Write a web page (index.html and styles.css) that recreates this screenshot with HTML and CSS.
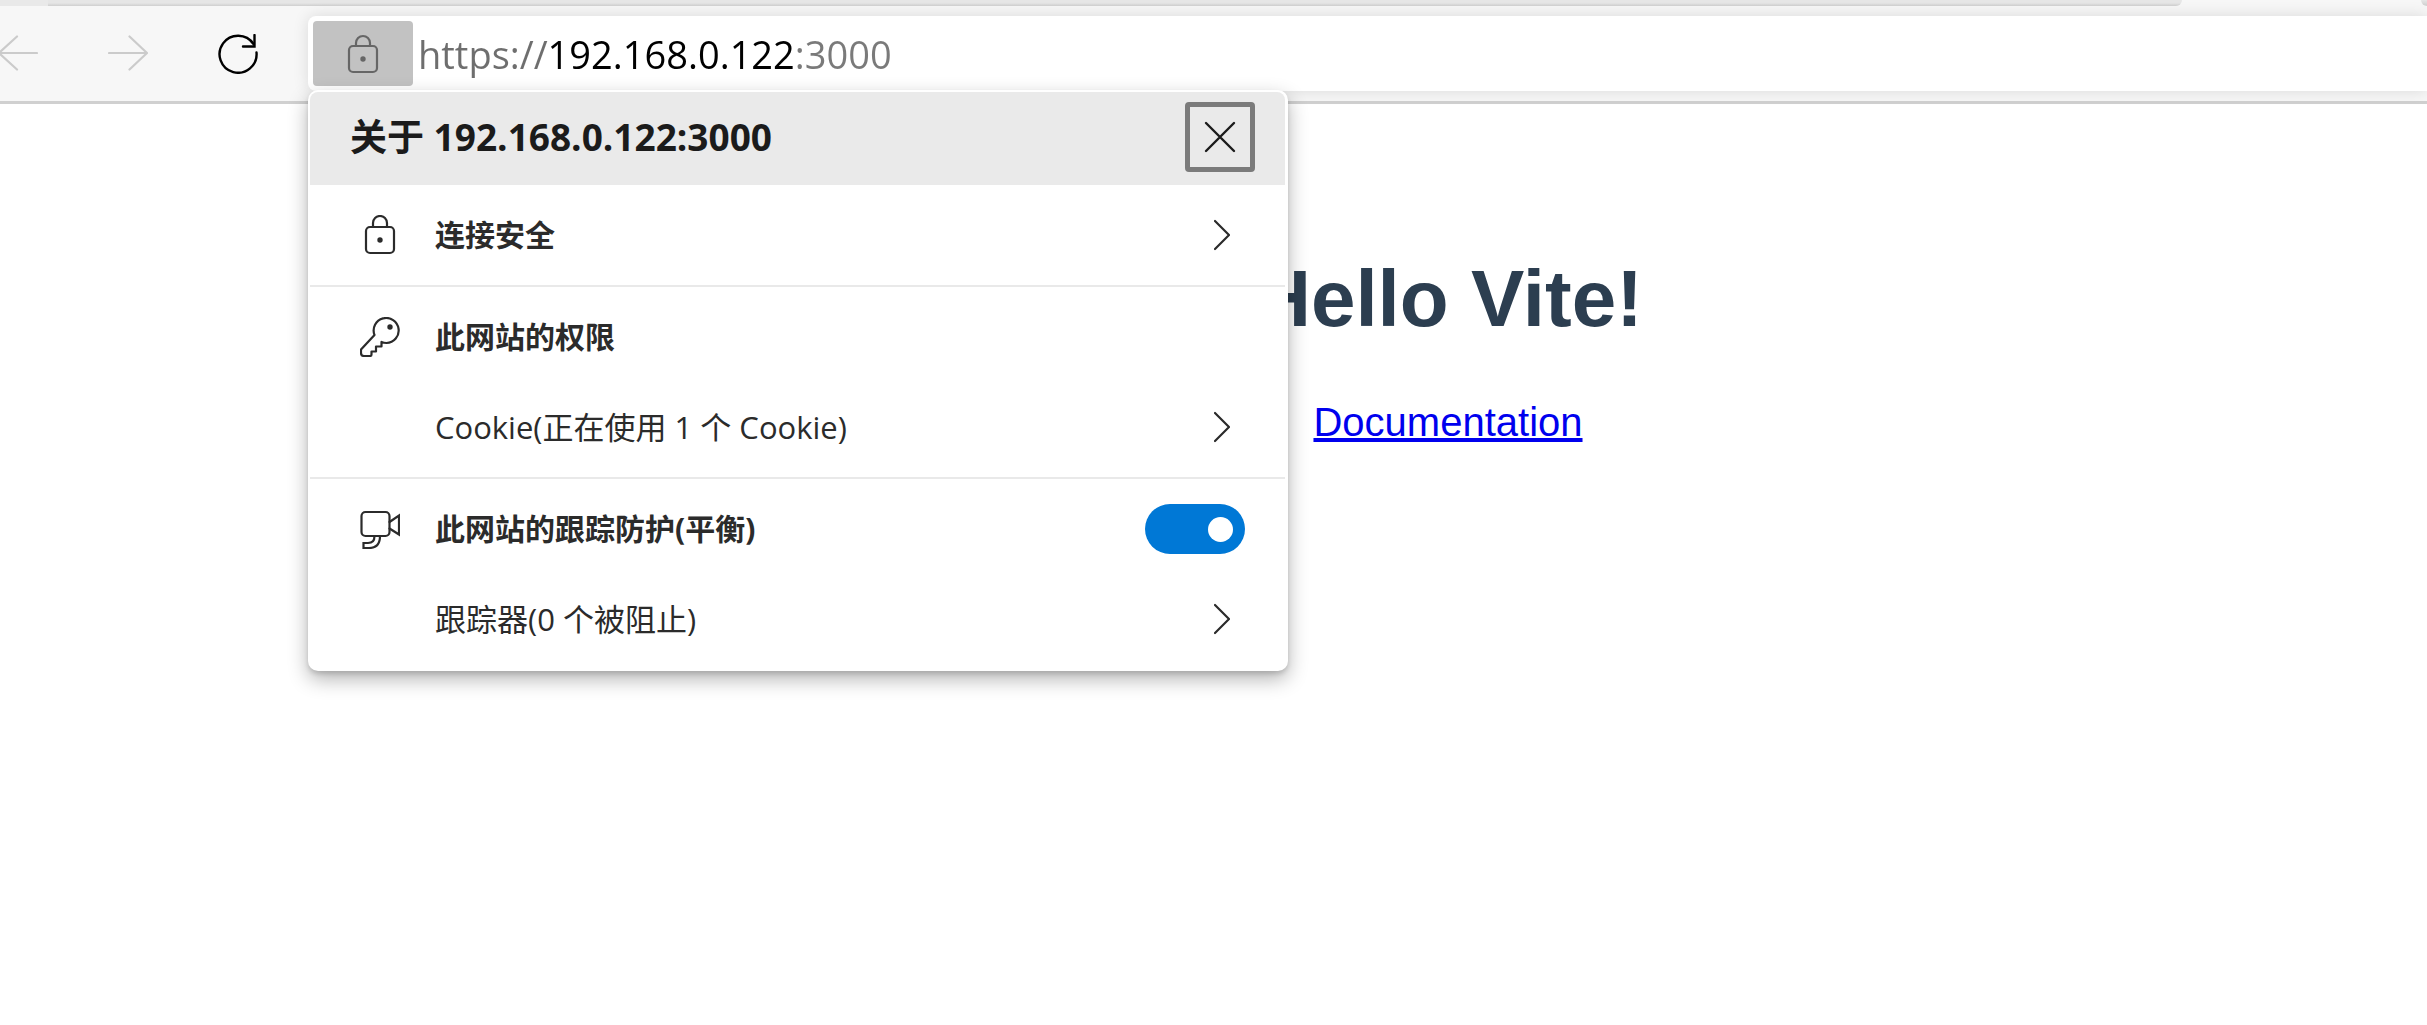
FILE: index.html
```html
<!DOCTYPE html>
<html lang="zh-CN">
<head>
<meta charset="utf-8">
<meta name="viewport" content="width=device-width, initial-scale=1">
<title>Vite App</title>
<link rel="stylesheet" href="styles.css">
</head>
<body>
<header class="browser">
  <div class="tabs">
    <div class="tabs-start"></div>
    <div class="tabs-rest"></div>
    <div class="tab-active"></div>
    <div class="tabs-end"></div>
  </div>
  <div class="toolbar">
    <nav class="nav">
      <button class="nav-btn" disabled aria-label="后退">
        <svg viewBox="0 0 40 40" stroke-width="2.200"><path d="M39 19H1M19 2.500L1 19l18 16.500"/></svg>
      </button>
      <button class="nav-btn" disabled aria-label="前进">
        <svg viewBox="0 0 40 40" stroke-width="2.200"><path d="M1 19h38M21.500 2.500L39 19 21.500 35.500"/></svg>
      </button>
      <button class="nav-btn reload" aria-label="刷新">
        <svg viewBox="0 0 40 40" stroke-width="2.400"><path d="M38.500 18.500A18.500 18.500 0 1 1 35.500 10"/><path class="square" d="M36.500 1v11.500H25"/></svg>
      </button>
    </nav>
    <div class="address">
      <button class="site-btn" aria-label="查看站点信息">
        <svg class="lock" viewBox="0 0 32 40" stroke-width="2.200"><rect x="2" y="12" width="28" height="26" rx="4"/><path d="M9 12V9a7 7 0 0 1 14 0v3"/><circle class="dot" cx="16" cy="25" r="2.700"/></svg>
      </button>
      <input class="url" type="text" value="https://192.168.0.122:3000" aria-label="地址" spellcheck="false">
      <section class="popup" aria-labelledby="about">
        <div class="popup-head">
          <h2 class="popup-title" id="about">关于 192.168.0.122:3000</h2>
          <button class="close" aria-label="关闭">
            <svg viewBox="0 0 32 32" stroke-width="2.400"><path d="M2 2l28 28M30 2L2 30"/></svg>
          </button>
        </div>
        <div class="group">
          <button class="row">
            <svg class="icon" viewBox="0 0 40 40" stroke-width="2.200"><rect x="6" y="12" width="28" height="26" rx="4"/><path d="M13 12V8a7 7 0 0 1 14 0v4"/><circle class="dot" cx="20" cy="25" r="2.700"/></svg>
            <span class="label strong">连接安全</span>
            <svg class="chevron" viewBox="0 0 16 32" stroke-width="2.200"><path d="M1 2l14 14L1 30"/></svg>
          </button>
        </div>
        <div class="group padded">
          <div class="row">
            <svg class="icon" viewBox="0 0 40 40" stroke-width="2.200"><path d="M14.500 18A12.500 12.500 0 1 1 26.500 26Q24 26 21.500 25V29.500H16V34.500H11.500V37.500Q11.500 39 10 39H4Q1 39 1 36V32.500Z"/><circle class="dot" cx="30" cy="10" r="2.700"/></svg>
            <h3 class="label strong">此网站的权限</h3>
          </div>
          <button class="row sub">
            <span class="label">Cookie(正在使用 1 个 Cookie)</span>
            <svg class="chevron" viewBox="0 0 16 32" stroke-width="2.200"><path d="M1 2l14 14L1 30"/></svg>
          </button>
        </div>
        <div class="group padded">
          <div class="row">
            <svg class="icon" viewBox="0 0 40 40" stroke-width="2.200"><rect x="1.500" y="3" width="28" height="24" rx="4"/><path stroke-linejoin="miter" d="M29.500 13L39 6.500v19L29.500 19.500M14.500 27C14.500 32 12 34 8 34H3.500v5H9C16 39 20 35 20 27"/></svg>
            <label class="label strong" for="tracking">此网站的跟踪防护(平衡)</label>
            <input class="switch" type="checkbox" id="tracking" checked>
          </div>
          <button class="row sub">
            <span class="label">跟踪器(0 个被阻止)</span>
            <svg class="chevron" viewBox="0 0 16 32" stroke-width="2.200"><path d="M1 2l14 14L1 30"/></svg>
          </button>
        </div>
      </section>
    </div>
  </div>
</header>
<main class="page">
  <h1 class="hello">Hello Vite!</h1>
  <a class="docs" href="#docs">Documentation</a>
</main>
</body>
</html>
```
FILE: styles.css
```css
* {
  box-sizing: border-box;
}

body {
  min-height: 100vh;
  margin: 0;
  background: #fff;
  font-family: "Open Sans", "Noto Sans CJK SC", sans-serif;
  color: #2b2b2b;
}

button {
  margin: 0;
  padding: 0;
  border: 0;
  background: none;
  font: inherit;
  color: inherit;
}

svg {
  display: block;
  flex: none;
  fill: none;
  stroke: currentColor;
  stroke-linecap: round;
  stroke-linejoin: round;
}

.dot {
  fill: currentColor;
  stroke: none;
}

.tabs {
  display: flex;
  height: 6px;
  background: #f7f7f7;
}

.tabs-start {
  width: 48px;
  background: #e9e9e9;
}

.tabs-rest {
  flex: 1;
  border-bottom-right-radius: 6px;
  background: linear-gradient(#e6e6e6 50%, #cfcfcf);
}

.tab-active {
  width: 239px;
}

.tabs-end {
  width: 6px;
  border-bottom-left-radius: 6px;
  background: linear-gradient(#e6e6e6, #cfcfcf);
}

.toolbar {
  display: flex;
  gap: 50px;
  height: 98px;
  padding: 10px 0;
  border-bottom: 3px solid #d0d0d0;
  background: #f7f7f7;
}

.nav {
  display: flex;
  align-items: center;
  gap: 70px;
  margin-left: -2px;
}

.nav-btn {
  width: 40px;
  color: #000;
}

.nav-btn:disabled {
  color: #cbcbcb;
}

.reload .square {
  stroke-linejoin: miter;
}

.address {
  position: relative;
  display: flex;
  flex: 1;
  align-items: center;
  gap: 5px;
  padding: 5px 0 5px 5px;
  border-radius: 8px 0 0 8px;
  background: #fff;
  box-shadow: 0 0 16px rgba(0, 0, 0, 0.12);
}

.site-btn {
  display: flex;
  align-items: center;
  justify-content: center;
  width: 100px;
  height: 65px;
  border-radius: 4px;
  background: #c2c2c2;
  color: #666;
}

.lock {
  width: 32px;
}

.url {
  flex: 1;
  min-width: 0;
  height: 65px;
  padding: 0;
  border: 0;
  outline: 0;
  font: 38px/56px "Open Sans", sans-serif;
  color: #000;
  background: linear-gradient(90deg, #6e6e6e 130px, #000 130px, #000 378px, #7a7a7a 378px);
  background-clip: text;
  -webkit-background-clip: text;
  -webkit-text-fill-color: transparent;
}

.popup {
  position: absolute;
  top: 74px;
  left: 0;
  z-index: 1;
  width: 980px;
  padding: 2px 3px 2px 2px;
  border-radius: 10px;
  background: #fff;
  box-shadow: 0 8px 20px rgba(0, 0, 0, 0.3), 0 3px 4px rgba(0, 0, 0, 0.12);
}

.popup-head {
  display: flex;
  align-items: center;
  justify-content: space-between;
  height: 93px;
  padding: 0 30px 4px 40px;
  border-radius: 8px 8px 0 0;
  background: #eaeaea;
}

.popup-title {
  margin: 0;
  font-size: 37px;
  font-weight: 700;
  line-height: 48px;
  color: #1b1b1b;
}

.close {
  display: flex;
  align-items: center;
  justify-content: center;
  width: 70px;
  height: 70px;
  border: 5px solid #7b7b7b;
  border-radius: 4px;
  color: #1b1b1b;
}

.close svg {
  width: 32px;
}

.group + .group {
  border-top: 2px solid #e9e9e9;
}

.padded {
  padding-bottom: 10px;
}

.row {
  display: flex;
  align-items: center;
  width: 100%;
  height: 100px;
  padding: 0 40px 0 50px;
  text-align: left;
}

.sub {
  height: 80px;
  padding-left: 125px;
}

.icon {
  width: 40px;
  margin-right: 35px;
}

.label {
  flex: 1;
  margin: 0;
  font-size: 31px;
  font-weight: 400;
  line-height: 40px;
}

.strong {
  font-size: 30px;
  font-weight: 700;
}

.chevron {
  width: 16px;
  margin-right: 15px;
}

.switch {
  display: flex;
  align-items: center;
  justify-content: flex-end;
  width: 100px;
  height: 50px;
  margin: 0;
  padding: 0 12px;
  border-radius: 25px;
  background: #0078d6;
  appearance: none;
}

.switch::before {
  content: "";
  width: 25px;
  height: 25px;
  border-radius: 50%;
  background: #fff;
}

.switch:not(:checked) {
  justify-content: flex-start;
  background: #8a8a8a;
}

.page {
  padding: 149px 0 0 469px;
  font-family: "Liberation Sans", Arial, sans-serif;
  text-align: center;
  color: #2c3e50;
}

.hello {
  margin: 0 0 54px;
  font-size: 80px;
  font-weight: 700;
  line-height: 92px;
}

.docs {
  font-size: 40px;
  line-height: 46px;
  color: #0000ee;
}
```
